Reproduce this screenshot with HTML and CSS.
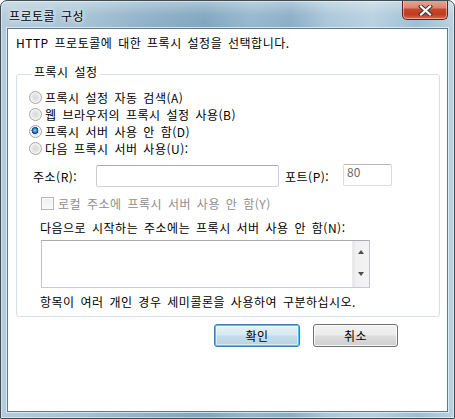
FILE: index.html
```html
<!DOCTYPE html>
<html lang="ko">
<head>
<meta charset="utf-8">
<title>프로토콜 구성</title>
<link rel="stylesheet" href="styles.css">
</head>
<body>
<div class="window">
  <div class="titlebar">
    <span class="title">프로토콜 구성</span>
    <button class="close" aria-label="닫기">
      <svg width="17" height="11" viewBox="0 0 17 11">
        <path d="M4 1.5 L13 9.5 M13 1.5 L4 9.5" stroke="#3a3a3a" stroke-width="4.2" stroke-linecap="square" fill="none"/>
        <path d="M4 1.5 L13 9.5 M13 1.5 L4 9.5" stroke="#ffffff" stroke-width="2.2" stroke-linecap="square" fill="none"/>
      </svg>
    </button>
  </div>
  <div class="client">
    <p class="intro">HTTP 프로토콜에 대한 프록시 설정을 선택합니다.</p>
    <fieldset class="group">
      <legend class="group-title">프록시 설정</legend>
      <div class="radios">
        <label class="radio"><span class="rb"></span>프록시 설정 자동 검색(A)</label>
        <label class="radio"><span class="rb"></span>웹 브라우저의 프록시 설정 사용(B)</label>
        <label class="radio"><span class="rb checked"></span>프록시 서버 사용 안 함(D)</label>
        <label class="radio"><span class="rb"></span>다음 프록시 서버 사용(U):</label>
      </div>
      <div class="addr-row">
        <span class="lbl-addr">주소(R):</span>
        <span class="input addr"></span>
        <span class="lbl-port">포트(P):</span>
        <span class="input port">80</span>
      </div>
      <label class="check disabled"><span class="cb"></span>로컬 주소에 프록시 서버 사용 안 함(Y)</label>
      <div class="except-label">다음으로 시작하는 주소에는 프록시 서버 사용 안 함(N):</div>
      <div class="textarea">
        <div class="scroll">
          <span class="arrow up"></span>
          <span class="arrow down"></span>
        </div>
      </div>
      <div class="hint">항목이 여러 개인 경우 세미콜론을 사용하여 구분하십시오.</div>
    </fieldset>
    <div class="buttons">
      <button class="btn default">확인</button>
      <button class="btn cancel">취소</button>
    </div>
  </div>
</div>
</body>
</html>
```

FILE: styles.css
```css
* { box-sizing: border-box; }
html, body { margin: 0; padding: 0; background: #ffffff; }
body {
  font-family: "Noto Sans CJK KR", "Noto Sans", sans-serif;
  font-size: 12px;
  letter-spacing: 0.5px;
  word-spacing: 2px;
  color: #000;
}
.window {
  width: 455px;
  height: 419px;
  border: 1px solid #3f4d57;
  border-radius: 7px 7px 1px 1px;
  background:
    linear-gradient(180deg, rgba(255,255,255,0.35) 0px, rgba(255,255,255,0.05) 14px, rgba(255,255,255,0) 28px),
    linear-gradient(90deg, #b4ccdb 0%, #a5c2d5 18%, #8db0c6 33%, #7fa6bf 45%, #95b8cd 55%, #8aaec5 64%, #a9c7d9 72%, #b8d1e0 82%, #9dbfd3 92%, #b9d2e1 100%);
  box-shadow: inset 0 0 0 1px rgba(255,255,255,0.45);
  display: flex;
  flex-direction: column;
  overflow: hidden;
}
.titlebar {
  height: 27px;
  display: flex;
  justify-content: space-between;
  align-items: flex-start;
  padding-left: 8px;
  padding-right: 6px;
}
.title {
  margin-top: 7px;
  line-height: 15px;
  font-size: 12px;
  color: #000;
  text-shadow: 0 0 6px rgba(255,255,255,0.9), 0 0 3px rgba(255,255,255,0.9);
}
.close {
  margin-top: -1px;
  width: 46px;
  height: 20px;
  padding: 0;
  border: 1px solid #5a2418;
  border-top: none;
  border-radius: 0 0 5px 5px;
  background: linear-gradient(180deg, #e9a899 0%, #d98670 40%, #c5472b 50%, #bf3d22 75%, #d8694a 100%);
  box-shadow: inset 0 0 0 1px rgba(255,220,210,0.55);
  display: flex;
  align-items: center;
  justify-content: center;
}
.close svg { display: block; margin-top: 1px; }
.client {
  flex: 1;
  margin: 0 6px 6px 6px;
  background: #fff;
  border: 1px solid #62798a;
  box-shadow: 0 0 0 1px rgba(230,240,247,0.8);
  padding: 5px 0 0 8px;
  display: flex;
  flex-direction: column;
}
.intro {
  margin: 0;
  line-height: 17px;
  height: 17px;
  white-space: nowrap;
}
.group {
  margin: 14px 7px 0 0;
  border: 1px solid #d5dfe5;
  border-radius: 3px;
  padding: 6px 6px 6px 12px;
  min-width: 0;
}
.group-title {
  margin-left: 3px;
  padding: 0 2px 4px 2px;
  line-height: 14px;
}
.radios { display: flex; flex-direction: column; }
.radio {
  display: flex;
  align-items: center;
  height: 17px;
  line-height: 17px;
  white-space: nowrap;
}
.rb {
  width: 13px;
  height: 13px;
  border-radius: 50%;
  margin-right: 3px;
  border: 1px solid #a5a5a5;
  background: radial-gradient(circle at 50% 50%, #d9d9d9 0, #e4e4e4 3px, #f2f2f2 5px, #fafafa 6px);
  box-shadow: inset 0 0 0 1px #f4f4f4;
  flex: none;
}
.rb.checked {
  background:
    radial-gradient(circle at 45% 40%, #a9d7f7 0, #4a9bd9 1.4px, #1e5d9c 2.6px, #143f70 3.4px, rgba(0,0,0,0) 3.6px),
    radial-gradient(circle at 50% 50%, #d9d9d9 0, #e4e4e4 3px, #f2f2f2 5px, #fafafa 6px);
}
.addr-row {
  display: flex;
  align-items: center;
  margin-top: 8px;
  height: 22px;
  padding-left: 4px;
  white-space: nowrap;
}
.lbl-addr { width: 63px; }
.input {
  height: 22px;
  border: 1px solid #abadb3;
  border-color: #a7abb2 #c8ccd3 #d0d4da #c8ccd3;
  border-radius: 2px;
  background: #fff;
}
.addr { width: 183px; }
.lbl-port { margin-left: 6px; width: 58px; }
.port {
  width: 49px;
  margin-top: -2px;
  color: #6d6d6d;
  padding: 0 3px;
  line-height: 14px;
  letter-spacing: 0;
  border-color: #b5b8bd #d6d9dd #dcdfe3 #d6d9dd;
}
.check {
  display: flex;
  align-items: center;
  height: 17px;
  margin-top: 8px;
  padding-left: 12px;
  color: #8e8e8e;
  white-space: nowrap;
}
.cb {
  width: 13px;
  height: 13px;
  border: 1px solid #b5b5b5;
  background: linear-gradient(180deg, #f0f0f0, #f9f9f9);
  box-shadow: inset 0 0 0 1px #fbfbfb;
  margin-right: 4px;
  flex: none;
}
.except-label {
  margin-top: 7px;
  line-height: 17px;
  padding-left: 11px;
  white-space: nowrap;
}
.textarea {
  margin: 4px 0 0 12px;
  width: 329px;
  height: 48px;
  border: 1px solid #abadb3;
  border-color: #a7abb2 #c1c5cb #c8ccd2 #c1c5cb;
  display: flex;
  justify-content: flex-end;
}
.scroll {
  width: 17px;
  height: 100%;
  background: linear-gradient(90deg, #e6e6e6 0, #f0f0f0 3px, #f3f3f3 100%);
  border-left: 1px solid #ebebeb;
  display: flex;
  flex-direction: column;
  align-items: center;
  justify-content: space-between;
  padding: 9px 0 11px 0;
}
.arrow {
  width: 0;
  height: 0;
  border-left: 3.5px solid transparent;
  border-right: 3.5px solid transparent;
}
.arrow.up { border-bottom: 4px solid #4d4d4d; }
.arrow.down { border-top: 4px solid #4d4d4d; }
.hint {
  margin-top: 5px;
  line-height: 17px;
  padding-left: 11px;
  white-space: nowrap;
}
.buttons {
  display: flex;
  justify-content: flex-end;
  gap: 13px;
  margin-top: 7px;
  padding-right: 49px;
}
.btn {
  height: 23px;
  font-family: inherit;
  font-size: 12px;
  line-height: 15px;
  letter-spacing: 0.5px;
  color: #000;
  border: 1px solid #707070;
  border-radius: 3px;
  padding: 0;
  background: linear-gradient(180deg, #f2f2f2 0%, #ebebeb 48%, #dddddd 52%, #cfcfcf 100%);
  box-shadow: inset 0 0 0 1px rgba(255,255,255,0.8);
}
.btn.default {
  width: 86px;
  border-color: #3c7fb1;
  background: linear-gradient(180deg, #e6f2f9 0%, #d7e8f2 48%, #c4dcea 52%, #b6d2e4 100%);
  box-shadow: inset 0 0 0 1px #48c5f3, inset 0 0 0 2px rgba(255,255,255,0.5);
}
.btn.cancel { width: 85px; }
```
